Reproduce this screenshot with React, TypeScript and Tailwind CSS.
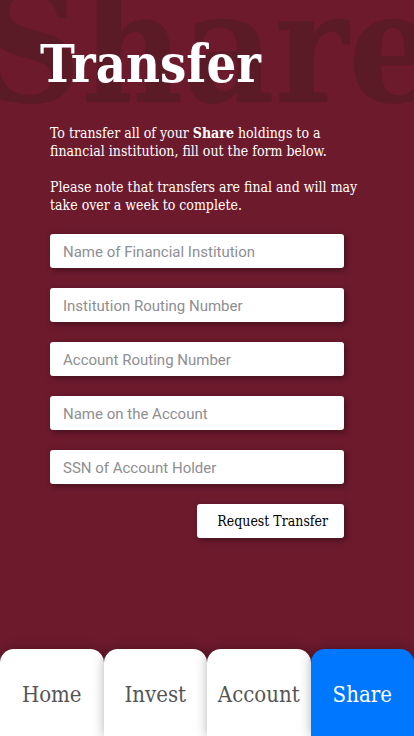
import React from "react";

const slab = "font-['DejaVu_Serif_Condensed','DejaVu_Serif',serif]";

const fields = [
  { id: "institution", label: "Name of Financial Institution" },
  { id: "institution-routing", label: "Institution Routing Number" },
  { id: "account-routing", label: "Account Routing Number" },
  { id: "account-name", label: "Name on the Account" },
  { id: "ssn", label: "SSN of Account Holder" },
];

const tabs = [
  { name: "Home", active: false },
  { name: "Invest", active: false },
  { name: "Account", active: false },
  { name: "Share", active: true },
];

export default function App() {
  return (
    <div className={`relative flex min-h-screen flex-col overflow-hidden bg-[#6d1a2d] ${slab}`}>
      <div
        aria-hidden="true"
        className="pointer-events-none absolute -top-14 -left-5 text-[156px] leading-[208px] font-bold whitespace-nowrap text-[#5a1a26] select-none"
      >
        Share
      </div>

      <main className="relative flex-1 pt-8 pb-8">
        <h1 className="pl-10 text-[52px] leading-[64px] font-bold text-white">Transfer</h1>

        <div className="mt-7 space-y-[18px] pr-10 pl-[50px] text-[14px] leading-[18px] text-white">
          <p>
            To transfer all of your <strong className="font-bold">Share</strong> holdings to a
            <br />
            financial institution, fill out the form below.
          </p>
          <p>
            Please note that transfers are final and will may
            <br />
            take over a week to complete.
          </p>
        </div>

        <form className="mt-5 flex flex-col gap-5 pr-[70px] pl-[50px]" onSubmit={(e) => e.preventDefault()}>
          {fields.map((f) => (
            <label key={f.id} htmlFor={f.id} className="block">
              <input
                id={f.id}
                type="text"
                aria-label={f.label}
                placeholder={f.label}
                className="block h-[34px] w-full rounded-[3px] bg-white px-[13px] pt-0.5 font-['Roboto',sans-serif] text-[15px] text-black shadow-[2px_2px_6px_rgba(0,0,0,0.4)] outline-none placeholder:text-[#8e8e93]"
              />
            </label>
          ))}
          <button
            type="submit"
            className="h-[34px] self-end rounded-[3px] bg-white pr-4 pl-5 text-[14px] text-black shadow-[2px_2px_6px_rgba(0,0,0,0.4)]"
          >
            Request Transfer
          </button>
        </form>
      </main>

      <nav className="relative grid h-[87px] grid-cols-4">
        {tabs.map((t) => (
          <a
            key={t.name}
            href="#"
            className={`flex items-center justify-center rounded-t-[14px] pt-1 text-[22px] shadow-[0_0_12px_rgba(0,0,0,0.3)] ${
              t.active ? "bg-[#0077ff] text-white" : "bg-white text-[#555555]"
            }`}
          >
            {t.name}
          </a>
        ))}
      </nav>
    </div>
  );
}
